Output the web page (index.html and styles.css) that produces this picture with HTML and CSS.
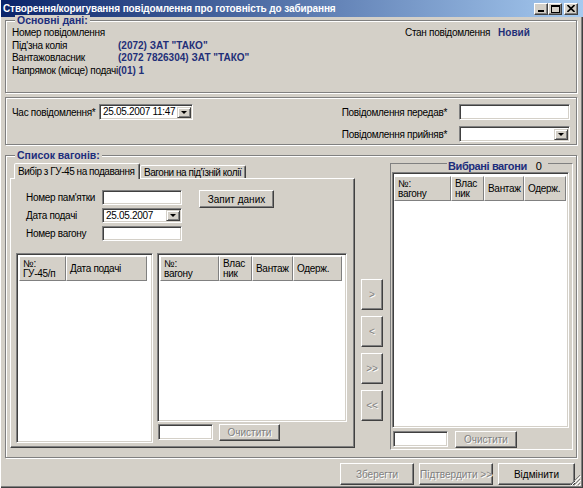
FILE: index.html
```html
<!DOCTYPE html>
<html lang="uk">
<head>
	<meta charset="UTF-8">
	<title>Створення/коригування повідомлення</title>
	<link rel="stylesheet" href="styles.css">
</head>
<body>
	<div class="window">
		<div class="titlebar">
			<span class="title">Створення/коригування повідомлення про готовність до забирання</span>
			<div class="cbtns">
				<span class="cbtn"><svg width="8" height="7" viewBox="0 0 8 7"><rect x="1" y="5" width="6" height="2" fill="#000"/></svg></span>
				<span class="cbtn"><svg width="9" height="8" viewBox="0 0 9 8"><rect x="0.5" y="0.5" width="8" height="7" fill="none" stroke="#000"/><rect x="0" y="0" width="9" height="2" fill="#000"/></svg></span>
				<span class="cbtn close"><svg width="8" height="7" viewBox="0 0 8 7"><path d="M0.5 0 L7.5 7 M7.5 0 L0.5 7" stroke="#000" stroke-width="1.6"/></svg></span>
			</div>
		</div>

		<div class="client">
			<!-- основні дані -->
			<div class="group main-info">
				<div class="group-title">Основні дані:</div>
				<div class="info">
					<div class="info-grid">
						<span>Номер повідомлення</span><span></span>
						<span>Під'зна колія</span><b>(2072) ЗАТ "ТАКО"</b>
						<span>Вантажовласник</span><b>(2072 7826304) ЗАТ "ТАКО"</b>
						<span>Напрямок (місце) подачі</span><b>(01) 1</b>
					</div>
					<div class="state"><span>Стан повідомлення</span><b>Новий</b></div>
				</div>
			</div>

			<!-- час / передав / прийняв -->
			<div class="panel msg">
				<div class="msg-left">
					<label class="lbl-time">Час повідомлення*</label>
					<div class="field combo w94"><span>25.05.2007 11:47</span><i class="drop"></i></div>
				</div>
				<div class="msg-right">
					<div class="msg-row"><label>Повідомлення передав*</label><div class="field w111"></div></div>
					<div class="msg-row"><label>Повідомлення прийняв*</label><div class="field combo w111"><span></span><i class="drop"></i></div></div>
				</div>
			</div>

			<!-- список вагонів -->
			<div class="group wagons">
				<div class="group-title">Список вагонів:</div>
				<div class="wagons-body">
					<div class="tabs">
						<div class="tab-strip">
							<span class="tab active">Вибір з ГУ-45 на подавання</span>
							<span class="tab">Вагони на під'їзній колії</span>
						</div>
						<div class="tab-page">
							<div class="query">
								<div class="query-fields">
									<label>Номер пам'ятки</label><div class="field"></div>
									<label>Дата подачі</label><div class="field combo"><span>25.05.2007</span><i class="drop"></i></div>
									<label>Номер вагону</label><div class="field"></div>
								</div>
								<button class="btn btn-query">Запит даних</button>
							</div>
							<div class="lists">
								<div class="grid grid-gu">
									<div class="grid-head">
										<span class="hc" style="width:47px">№:<br>ГУ-45/п</span>
										<span class="hc" style="width:81px">Дата подачі</span>
									</div>
								</div>
								<div class="list-col">
									<div class="grid grid-wag">
										<div class="grid-head">
											<span class="hc" style="width:59px">№:<br>вагону</span>
											<span class="hc" style="width:33px">Влас<br>ник</span>
											<span class="hc" style="width:41px">Вантаж</span>
											<span class="hc" style="width:49px">Одерж.</span>
										</div>
									</div>
									<div class="grid-foot">
										<div class="field w55"></div>
										<button class="btn btn-clear" disabled>Очистити</button>
									</div>
								</div>
							</div>
						</div>
					</div>

					<div class="arrows">
						<button class="btn" disabled>&gt;</button>
						<button class="btn" disabled>&lt;</button>
						<button class="btn" disabled>&gt;&gt;</button>
						<button class="btn" disabled>&lt;&lt;</button>
					</div>

					<div class="sel">
						<div class="sel-cap"><b>Вибрані вагони</b><span class="cnt">0</span></div>
						<div class="grid grid-sel">
							<div class="grid-head">
								<span class="hc" style="width:57px">№:<br>вагону</span>
								<span class="hc" style="width:33px">Влас<br>ник</span>
								<span class="hc" style="width:40px">Вантаж</span>
								<span class="hc" style="width:42px">Одерж.</span>
							</div>
						</div>
						<div class="grid-foot sel-foot">
							<div class="field w55"></div>
							<button class="btn btn-clear" disabled>Очистити</button>
						</div>
					</div>
				</div>
			</div>

			<div class="actions">
				<button class="btn act" disabled>Зберегти</button>
				<button class="btn act" disabled>Підтвердити &gt;&gt;</button>
				<button class="btn act cancel">Відмінити</button>
			</div>
		</div>

		<svg class="grip" width="12" height="12" viewBox="0 0 12 12">
			<path d="M11 1 L1 11 M11 5 L5 11 M11 9 L9 11" stroke="#808080" stroke-width="1"/>
			<path d="M12 2 L2 12 M12 6 L6 12 M12 10 L10 12" stroke="#fff" stroke-width="1"/>
		</svg>
	</div>
</body>
</html>
```

FILE: styles.css
```css
*{
	box-sizing:border-box;
}
body{
	margin:0;
	font:10px "Liberation Sans", Arial, sans-serif;
	letter-spacing:-0.3px;
	color:#000;
	background:#d4d0c8;
}
label,
span{
	white-space:nowrap;
}
.window{
	position:relative;
	width:583px;
	height:488px;
	background:#d4d0c8;
	border-left:1px solid #fff;
	box-shadow:inset -1px -1px 0 #404040, inset -2px -2px 0 #808080;
}

/* заголовок вікна */
.titlebar{
	height:17px;
	display:flex;
	align-items:center;
	justify-content:space-between;
	padding:0 5px 0 2px;
	background:linear-gradient(to right, #0a246a, #a6caf0);
	color:#fff;
	font:bold 10px "Liberation Sans", Arial, sans-serif;
	letter-spacing:-0.1px;
}
.cbtns{
	display:flex;
}
.cbtn{
	width:14px;
	height:12px;
	display:flex;
	align-items:center;
	justify-content:center;
	background:#d4d0c8;
	border:1px solid;
	border-color:#fff #404040 #404040 #fff;
	box-shadow:inset -1px -1px 0 #808080;
}
.cbtn.close{
	margin-left:2px;
}

.client{
	padding:0 5px 0 4px;
}

/* рамки груп */
.group{
	border:1px solid #808080;
	box-shadow:inset 1px 1px 0 #fff, 1px 1px 0 #fff;
	width:572px;
}
.group-title{
	width:fit-content;
	margin:-6px 0 0 9px;
	padding:0 2px;
	background:#d4d0c8;
	color:#1c2d7c;
	font:bold 10.5px "Liberation Sans", Arial, sans-serif;
	letter-spacing:0;
	line-height:11px;
}
.panel{
	border:1px solid #808080;
	box-shadow:inset 1px 1px 0 #fff, 1px 1px 0 #fff;
	width:572px;
}

.main-info{
	margin-top:3px;
	height:73px;
}
.info{
	display:flex;
	padding:1px 6px 0;
	line-height:12.5px;
}
.info-grid{
	display:grid;
	grid-template-columns:106px auto;
	width:393px;
}
.info b,
.state b{
	color:#1f2f78;
	font:bold 10px "Liberation Sans", Arial, sans-serif;
	letter-spacing:0;
	line-height:12.5px;
	white-space:nowrap;
}
.state{
	display:flex;
	gap:8px;
}

/* поля вводу */
.field{
	height:15px;
	background:#fff;
	border:1px solid;
	border-color:#808080 #fff #fff #808080;
	box-shadow:inset 1px 1px 0 #404040, inset -1px -1px 0 #d4d0c8;
	display:flex;
	align-items:center;
	padding-left:3px;
	line-height:12px;
}
.combo{
	justify-content:space-between;
	padding-right:1px;
}
.drop{
	width:14px;
	height:11px;
	background:#d4d0c8;
	border:1px solid;
	border-color:#d4d0c8 #404040 #404040 #d4d0c8;
	box-shadow:inset 1px 1px 0 #fff, inset -1px -1px 0 #808080;
	display:flex;
	align-items:center;
	justify-content:center;
}
.drop::after{
	content:"";
	border-left:3px solid transparent;
	border-right:3px solid transparent;
	border-top:3px solid #000;
}
.w94{ width:94px; height:16px; }
.w111{ width:111px; height:16px; }
.w55{ width:55px; height:16px; }

.msg{
	margin-top:4px;
	height:48px;
	display:flex;
	justify-content:space-between;
	padding:6px 6px 0 6px;
}
.msg-left{
	display:flex;
	align-items:center;
	height:16px;
}
.lbl-time{
	width:87px;
}
.msg-right{
	display:flex;
	flex-direction:column;
	gap:6px;
}
.msg-row{
	display:flex;
	align-items:center;
	justify-content:flex-end;
	gap:12px;
}

/* список вагонів */
.wagons{
	margin-top:10px;
	padding-bottom:7px;
}
.wagons-body{
	display:flex;
	align-items:flex-start;
	margin-top:2px;
	padding:0 3px 0 4px;
}
.tabs{
	width:345px;
}
.tab-strip{
	display:flex;
	align-items:flex-end;
	height:15px;
	padding-left:4px;
}
.tab{
	height:13px;
	line-height:11px;
	padding:1px 3px 0;
	background:#d4d0c8;
	border:1px solid;
	border-bottom:none;
	border-color:#fff #404040 transparent #fff;
	box-shadow:inset -1px 0 0 #808080;
	border-radius:2px 2px 0 0;
	white-space:nowrap;
	letter-spacing:-0.45px;
	overflow:hidden;
}
.tab.active{
	width:126px;
	height:16px;
	margin-bottom:-1px;
	padding-top:2px;
	position:relative;
	z-index:1;
}
.tab:not(.active){
	width:106px;
}
.tab-page{
	height:270px;
	border:1px solid;
	border-color:#fff #404040 #404040 #fff;
	box-shadow:inset -1px -1px 0 #808080;
	padding:11px 0 0 5px;
}
.query{
	display:flex;
	align-items:flex-start;
	margin-left:10px;
}
.query-fields{
	display:grid;
	grid-template-columns:76px 80px;
	grid-auto-rows:15px;
	row-gap:3px;
	align-items:center;
}

.btn{
	font:inherit;
	color:#000;
	background:#d4d0c8;
	border:1px solid;
	border-color:#fff #404040 #404040 #fff;
	box-shadow:inset -1px -1px 0 #808080;
	padding:0;
	white-space:nowrap;
}
.btn:disabled{
	color:#808080;
	text-shadow:1px 1px 0 #fff;
}
.btn-query{
	width:75px;
	height:18px;
	margin-left:17px;
}

.lists{
	display:flex;
	gap:4px;
	margin-top:12px;
}
.grid{
	background:#fff;
	border:1px solid;
	border-color:#808080 #fff #fff #808080;
	box-shadow:inset 1px 1px 0 #404040, inset -1px -1px 0 #d4d0c8;
	padding:2px 0 0 2px;
}
.grid-gu{
	width:137px;
	height:190px;
}
.list-col{
	width:190px;
}
.grid-wag{
	height:169px;
}
.grid-head{
	display:flex;
}
.hc{
	height:25px;
	display:flex;
	align-items:center;
	padding:0 3px;
	line-height:10px;
	background:#d4d0c8;
	border:1px solid;
	border-color:#fff #808080 #808080 #fff;
	white-space:nowrap;
	overflow:hidden;
}
.grid-foot{
	display:flex;
	align-items:flex-start;
	gap:6px;
	margin-top:2px;
	padding-left:1px;
}
.btn-clear{
	width:61px;
	height:17px;
}

.arrows{
	display:flex;
	flex-direction:column;
	gap:6px;
	width:22px;
	margin:116px 0 0 6px;
}
.arrows .btn{
	height:31px;
}

.sel{
	width:183px;
	height:287px;
	margin-left:7px;
	border:1px solid;
	border-color:#808080 #fff #fff #808080;
	padding:0 3px 0 1px;
}
.sel-cap{
	display:flex;
	height:9px;
	line-height:9px;
	margin:-2px 0 0 55px;
}
.sel-cap b{
	color:#1c2d7c;
	background:#d4d0c8;
	padding:0 1px;
	font:bold 11px "Liberation Sans", Arial, sans-serif;
	line-height:9px;
	letter-spacing:-0.4px;
}
.sel-cap .cnt{
	background:#d4d0c8;
	padding:0 6px 0 8px;
	font-size:11px;
}
.grid-sel{
	height:256px;
	margin-top:1px;
	padding:3px 0 0 1px;
}
.sel-foot{
	margin-top:3px;
	gap:7px;
}
.sel-foot .btn-clear{
	width:62px;
	height:17px;
}

.actions{
	display:flex;
	justify-content:flex-end;
	gap:5px;
	margin-top:5px;
	padding-right:3px;
}
.act{
	width:74px;
	height:22px;
}
.act.cancel{
	width:77px;
}

.grip{
	position:absolute;
	right:2px;
	bottom:2px;
}
```
